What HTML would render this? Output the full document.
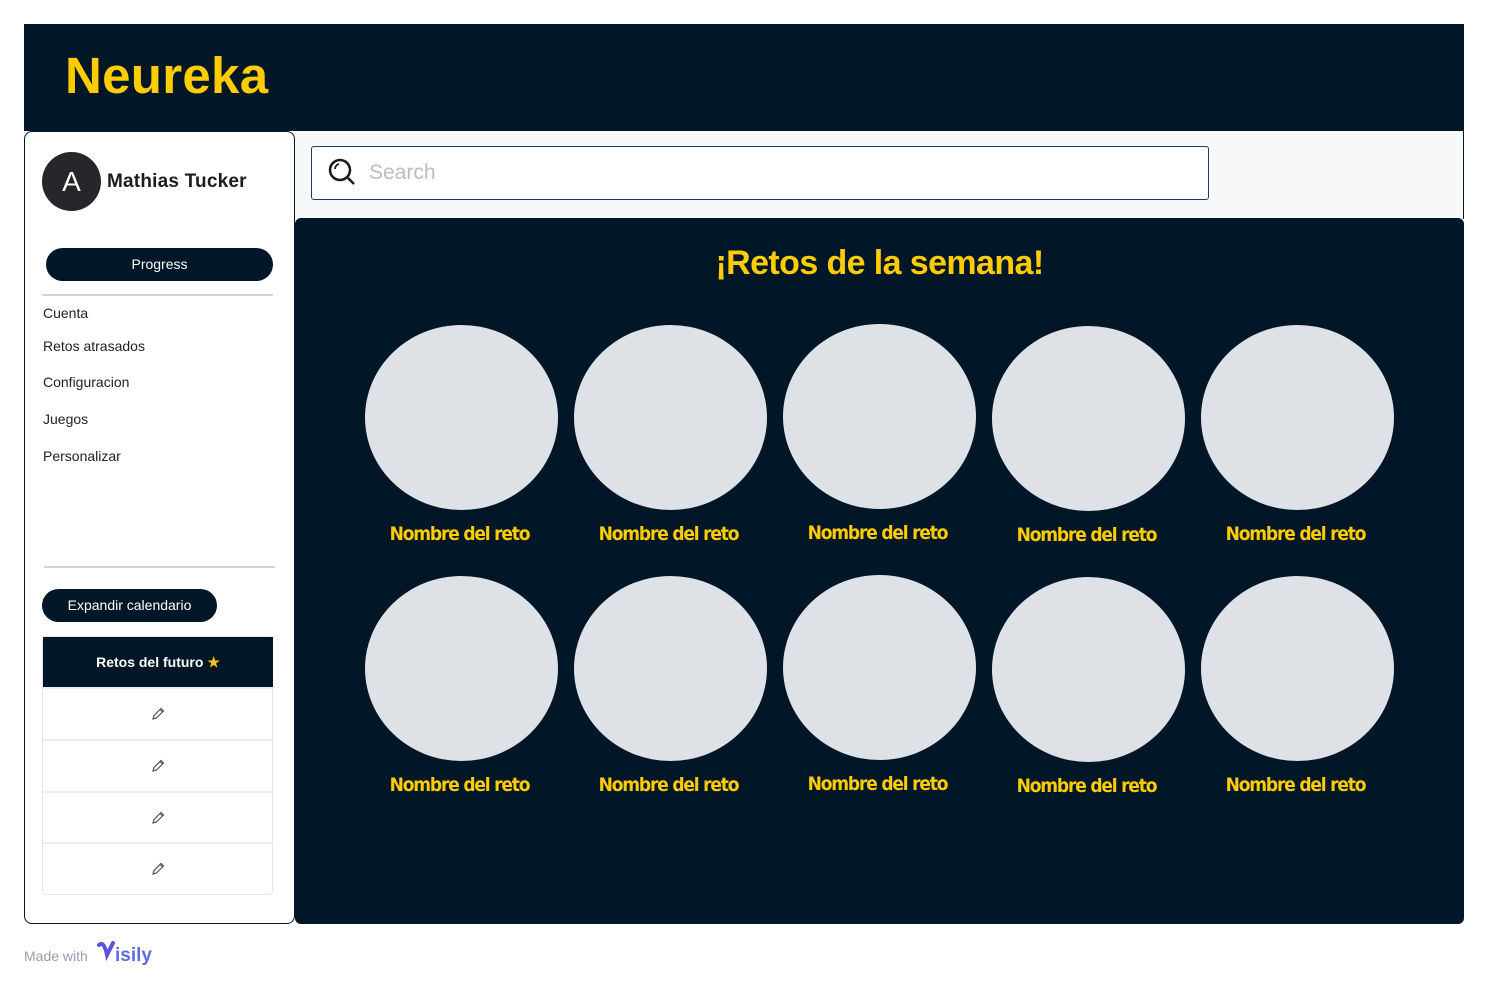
<!DOCTYPE html>
<html><head><meta charset="utf-8"><style>
*{margin:0;padding:0;box-sizing:border-box}
body{width:1488px;height:988px;background:#fff;font-family:"Liberation Sans",sans-serif;position:relative;overflow:hidden}
.a{position:absolute}
.dk{background:#011627}
.y{color:#FFCC00;font-weight:bold}
.c{position:absolute;width:193px;height:185px;border-radius:50%;background:#DEE1E6}
.l{position:absolute;width:193px;text-align:center;color:#FFCC00;font-weight:bold;font-size:19px;letter-spacing:-1.2px;font-family:"DejaVu Sans Condensed","DejaVu Sans",sans-serif}
.nav{position:absolute;left:43px;font-size:14px;color:#222}
.row{position:absolute;left:43px;width:230px;height:52px;border-top:2px solid #eceef1;text-align:center}
</style></head><body>
<div class="a dk" style="left:24px;top:24px;width:1440px;height:107px"></div>
<div class="a y" style="left:65px;top:46px;font-size:51px;letter-spacing:0.3px">Neureka</div>

<div class="a" style="left:24px;top:131px;width:271px;height:793px;border:1px solid #011627;border-radius:8px;background:#fff"></div>
<div class="a" style="left:42px;top:152px;width:59px;height:59px;border-radius:50%;background:#26272b;color:#fff;font-size:28px;text-align:center;line-height:59px">A</div>
<div class="a" style="left:107px;top:171px;font-size:19px;font-weight:bold;color:#1c1c1c;letter-spacing:0.2px">Mathias Tucker</div>
<div class="a dk" style="left:46px;top:248px;width:227px;height:33px;border-radius:17px;color:#fff;font-size:14px;text-align:center;line-height:33px">Progress</div>
<div class="a" style="left:42px;top:294px;width:231px;height:2px;background:#d4d5da"></div>
<div class="nav" style="top:305px">Cuenta</div>
<div class="nav" style="top:338px">Retos atrasados</div>
<div class="nav" style="top:374px">Configuracion</div>
<div class="nav" style="top:411px">Juegos</div>
<div class="nav" style="top:448px">Personalizar</div>
<div class="a" style="left:44px;top:566px;width:231px;height:2px;background:#d4d5da"></div>
<div class="a dk" style="left:42px;top:589px;width:175px;height:33px;border-radius:17px;color:#fff;font-size:14px;text-align:center;line-height:33px">Expandir calendario</div>
<div class="a" style="left:42px;top:636px;width:231px;height:259px;border:1px solid #e3e5e8;border-radius:4px"></div>
<div class="a dk" style="left:43px;top:637px;width:230px;height:50px;color:#fff;font-size:14px;font-weight:bold;text-align:center;line-height:50px">Retos del futuro <span style="color:#FFC21A">★</span></div>
<div class="row" style="top:687px"><svg style="margin-top:18px" width="14" height="14" viewBox="0 0 14 14"><path d="M2 12l1-3.5 7-7 2.5 2.5-7 7z M9 2.5l2.5 2.5" fill="none" stroke="#555" stroke-width="1.2"/></svg></div>
<div class="row" style="top:739px"><svg style="margin-top:18px" width="14" height="14" viewBox="0 0 14 14"><path d="M2 12l1-3.5 7-7 2.5 2.5-7 7z M9 2.5l2.5 2.5" fill="none" stroke="#555" stroke-width="1.2"/></svg></div>
<div class="row" style="top:791px"><svg style="margin-top:18px" width="14" height="14" viewBox="0 0 14 14"><path d="M2 12l1-3.5 7-7 2.5 2.5-7 7z M9 2.5l2.5 2.5" fill="none" stroke="#555" stroke-width="1.2"/></svg></div>
<div class="row" style="top:842px"><svg style="margin-top:18px" width="14" height="14" viewBox="0 0 14 14"><path d="M2 12l1-3.5 7-7 2.5 2.5-7 7z M9 2.5l2.5 2.5" fill="none" stroke="#555" stroke-width="1.2"/></svg></div>

<div class="a" style="left:295px;top:131px;width:1169px;height:88px;background:#F7F8FA;border-right:1px solid #011627"></div>
<div class="a" style="left:311px;top:146px;width:898px;height:54px;border:1px solid #1d3c5e;border-radius:3px;background:#fff"></div>
<svg class="a" style="left:327px;top:157px" width="32" height="32" viewBox="0 0 32 32"><circle cx="13" cy="13" r="10" fill="none" stroke="#1a1a1a" stroke-width="2.5"/><path d="M21 21l6 6" stroke="#1a1a1a" stroke-width="2.5"/><path d="M8 12a5 5 0 0 1 4-5" stroke="#1a1a1a" stroke-width="1.8" fill="none"/></svg>
<div class="a" style="left:369px;top:161px;font-size:21px;color:#b8bcc6">Search</div>

<div class="a dk" style="left:295px;top:218px;width:1169px;height:706px;border-radius:6px"></div>
<div class="a y" style="left:295px;top:244px;width:1169px;text-align:center;font-size:34px;letter-spacing:-0.6px">¡Retos de la semana!</div>

<div class="c" style="left:365px;top:325px"></div><div class="c" style="left:574px;top:325px"></div><div class="c" style="left:783px;top:324px"></div><div class="c" style="left:992px;top:326px"></div><div class="c" style="left:1201px;top:325px"></div>
<div class="l" style="left:363px;top:523px">Nombre del reto</div><div class="l" style="left:572px;top:523px">Nombre del reto</div><div class="l" style="left:781px;top:522px">Nombre del reto</div><div class="l" style="left:990px;top:524px">Nombre del reto</div><div class="l" style="left:1199px;top:523px">Nombre del reto</div>
<div class="c" style="left:365px;top:576px"></div><div class="c" style="left:574px;top:576px"></div><div class="c" style="left:783px;top:575px"></div><div class="c" style="left:992px;top:577px"></div><div class="c" style="left:1201px;top:576px"></div>
<div class="l" style="left:363px;top:774px">Nombre del reto</div><div class="l" style="left:572px;top:774px">Nombre del reto</div><div class="l" style="left:781px;top:773px">Nombre del reto</div><div class="l" style="left:990px;top:775px">Nombre del reto</div><div class="l" style="left:1199px;top:774px">Nombre del reto</div>

<div class="a" style="left:24px;top:948px;font-size:14px;color:#9a9cb0">Made with</div>
<svg class="a" style="left:97px;top:941px" width="20" height="24" viewBox="0 0 20 24"><path d="M2 4c3-3 6 0 8 10l6-12" fill="none" stroke="#5b55d6" stroke-width="4" stroke-linecap="round"/></svg>
<div class="a" style="left:115px;top:945px;font-size:19px;color:#5b6ee0;font-weight:bold">isily</div>
</body></html>
